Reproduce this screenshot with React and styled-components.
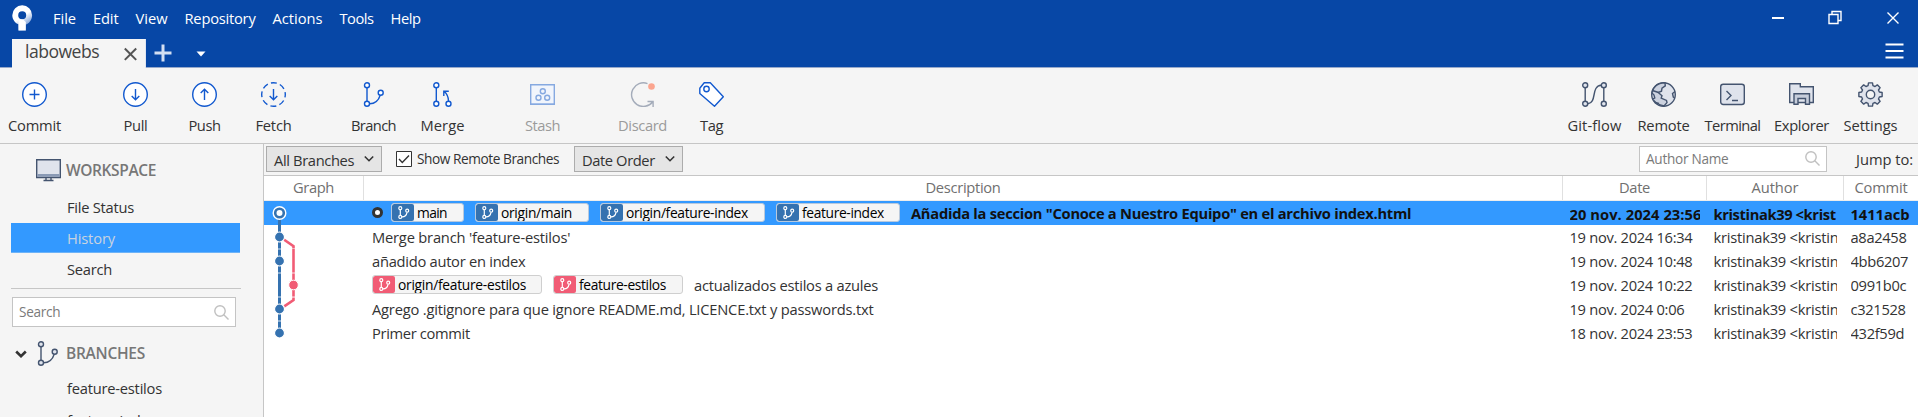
import React from "react";
import styled, { createGlobalStyle, css } from "styled-components";

const GlobalStyle = createGlobalStyle`
  * { box-sizing: border-box; }
  html, body { margin: 0; height: 100%; overflow: hidden; }
  body {
    font-family: "Open Sans", "Noto Sans", sans-serif;
    font-size: 14.7px;
    color: #333;
    background: #fff;
  }
  svg { display: block; flex: none; }
`;

const BLUE = "#1259cf";
const SLATE = "#44546f";
const SLATE_FILL = "#dfe3ec";
const TRUNK = "#3572b0";
const SIDE = "#f15c75";

/* A line of text with its own tracking */
const Text = styled.span`
  display: block;
  white-space: pre;
  line-height: 20px;
  letter-spacing: ${(p) => p.$track ?? -0.25}px;
`;

/* ---------- frame ---------- */
const Window = styled.div`
  display: flex;
  flex-direction: column;
  width: 100%;
  height: 417px;
  overflow: hidden;
  background: #f5f5f5;
`;
const TitleBar = styled.header`
  display: flex;
  align-items: flex-start;
  height: 39px;
  padding-left: 12px;
  background: #0747a6;
  color: #fff;
`;
const Logo = styled.div`
  width: 41px;
  padding-top: 4px;
`;
const Menu = styled.nav`
  display: flex;
  flex: 1;
  gap: 17px;
  padding-top: 8px;
`;
const WindowControls = styled.div`
  display: flex;
  padding: 10px 18px 0 0;
  gap: 43px;
`;
const TabStrip = styled.div`
  display: flex;
  height: 29px;
  background: linear-gradient(#0747a6 28px, #97a9ca 28px);
`;
const Tab = styled.div`
  display: flex;
  justify-content: space-between;
  width: 134px;
  height: 29px;
  margin-left: 12px;
  padding: 2px 8px 0 13px;
  background: #f5f5f5;
  border-right: 1px solid #dfe6f3;
  color: #444;
  font-size: 17.6px;
  svg { margin-top: 6px; }
`;
const TabActions = styled.div`
  display: flex;
  flex: 1;
  padding: 5px 0 0 8px;
  gap: 23px;
`;
const Hamburger = styled.div`
  padding: 4px 14px 0 0;
`;

/* ---------- toolbar ---------- */
const Toolbar = styled.div`
  display: flex;
  height: 76px;
  border-bottom: 1px solid #c6c6c6;
  padding-right: 13px;
`;
const ToolGroup = styled.div`
  display: flex;
  margin-left: ${(p) => p.$gap || 0}px;
`;
const Spacer = styled.div`
  flex: 1;
`;
const ToolButton = styled.div`
  display: flex;
  flex-direction: column;
  align-items: center;
  width: 69px;
  padding-top: 14px;
  gap: 8px;
  color: ${(p) => (p.$disabled ? "#9b9b9b" : "#333")};
`;

/* ---------- body ---------- */
const Body = styled.div`
  display: flex;
  flex: 1;
  min-height: 0;
`;
const Sidebar = styled.aside`
  width: 264px;
  border-right: 1px solid #c6c6c6;
  overflow: hidden;
`;
const SectionHead = styled.div`
  display: flex;
  align-items: center;
  height: 25px;
  margin-top: ${(p) => p.$top}px;
  padding-left: ${(p) => p.$left}px;
  font-size: 15.5px;
  font-weight: 600;
  color: #777;
  ${Text} { margin-top: -2px; }
`;
const HeadIcon = styled.div`
  width: ${(p) => p.$w}px;
`;
const NavItem = styled.div`
  display: flex;
  align-items: center;
  height: 31px;
  margin: 0 23px 0 11px;
  padding-left: 56px;
  ${(p) =>
    p.$active &&
    css`
      height: 30px;
      background: #3399ff;
      border-bottom: 1px solid #6db3f8;
      color: #c9d3e0;
    `}
`;
const NavList = styled.div`
  margin-top: ${(p) => p.$top}px;
  ${NavItem}:first-child { padding-bottom: 2px; }
`;
const Divider = styled.div`
  height: 1px;
  margin: 4px 22px 0 11px;
  background: #c6c6c6;
`;
const Field = styled.div`
  display: flex;
  align-items: center;
  justify-content: space-between;
  width: ${(p) => p.$w}px;
  height: ${(p) => p.$h}px;
  padding: 0 6px;
  background: #fff;
  border: 1px solid #c4c4c4;
  font-size: 13.6px;
  color: #7a7a7a;
`;
const SidebarSearch = styled.div`
  padding: 8px 0 0 12px;
`;

const Main = styled.main`
  flex: 1;
  min-width: 0;
  background: #fff;
`;
const FilterBar = styled.div`
  display: flex;
  align-items: center;
  height: 32px;
  padding: 0 5px 2px 2px;
  background: #f5f5f5;
  border-bottom: 1px solid #c6c6c6;
`;
const Select = styled.div`
  display: flex;
  align-items: center;
  justify-content: space-between;
  width: ${(p) => p.$w}px;
  height: 26px;
  padding: 2px 6px 0 7px;
  background: #e5e5e5;
  border: 1px solid #acacac;
  svg { margin-top: -1px; }
`;
const CheckLabel = styled.div`
  display: flex;
  align-items: center;
  gap: 5px;
  width: 178px;
  margin: 0 0 0 14px;
  font-size: 13.7px;
`;
const JumpTo = styled.div`
  margin-left: 29px;
`;

const Grid = styled.div`
  display: grid;
  grid-template-columns: 100px 1fr 144px 137px 74px;
`;
const GridHead = styled(Grid)`
  height: 25px;
  border-bottom: 1px solid #ededed;
  color: #707070;
`;
const HeadCell = styled.div`
  display: flex;
  justify-content: center;
  padding-top: 1px;
  border-right: ${(p) => (p.$last ? "none" : "1px solid #e0e0e0")};
`;
const Row = styled(Grid)`
  height: 24px;
  background: ${(p) => (p.$selected ? "#3399ff" : "#fff")};
  color: ${(p) => (p.$selected ? "#111" : "#333")};
  font-weight: ${(p) => (p.$selected ? 700 : 400)};
`;
const Cell = styled.div`
  margin: ${(p) => (p.$selected ? 3 : 2)}px 7px 0 6.5px;
  height: 21px;
  overflow: hidden;
`;
const DescCell = styled.div`
  display: flex;
  align-items: center;
  padding-left: 8px;
  overflow: hidden;
  padding-bottom: 1px;
`;
const Message = styled(Text)`
  padding-top: ${(p) => (p.$tagged ? 0 : 1)}px;
`;
const Head = styled.i`
  flex: none;
  width: 11px;
  height: 11px;
  margin-right: 8px;
  border: 3px solid #333;
  border-radius: 50%;
  background: #fff;
`;
const Ref = styled.div`
  display: flex;
  width: ${(p) => p.$w}px;
  height: 19px;
  margin-right: 11px;
  border: 1px solid ${(p) => (p.$selected ? "#b9c9dc" : "#cfcfcf")};
  border-radius: 3px;
  background: #f5f5f5;
  color: #000;
  font-size: 13.8px;
  font-weight: 400;
  overflow: hidden;
  ${Text} { line-height: 17px; padding-left: 3px; }
`;
const RefIcon = styled.div`
  display: flex;
  align-items: center;
  justify-content: center;
  width: 22px;
  border-radius: 2px;
  background: ${(p) => p.$color};
`;

/* ---------- icons ---------- */
const Svg = ({ w = 25, h = 25, color = BLUE, sw = 1.4, children }) => (
  <svg width={w} height={h} viewBox={`0 0 ${w} ${h}`} fill="none" stroke={color} strokeWidth={sw}>
    {children}
  </svg>
);
const AppLogo = () => (
  <svg width="21" height="28" viewBox="0 0 21 28">
    <defs>
      <linearGradient id="shade" x1="0.6" y1="0.4" x2="0.85" y2="0.85">
        <stop offset="0" stopColor="#fff" />
        <stop offset="1" stopColor="#5c89cf" />
      </linearGradient>
    </defs>
    <path
      fill="url(#shade)"
      fillRule="evenodd"
      d="M10.2 1.3a9.9 9.9 0 0 1 9.9 9.9c0 5.2-3.6 8.6-6.3 9.4v6H6.5v-6.3C3 18.8.3 15.4.3 11.200a9.900 9.900 0 0 1 9.900-9.900zM10.200 7.200a4 4 0 1 0 0 8 4 4 0 0 0 0-8z"
    />
    <path fill="#fff" d="M6.500 15.500h4.600l2.700 2.500v8.600H6.500z" />
  </svg>
);
const CircleIcon = ({ dashed, children }) => (
  <Svg>
    <circle cx="12.5" cy="12.5" r="11.8" fill={dashed ? "none" : "#fff"} strokeDasharray={dashed ? "6 3.27" : undefined} strokeDashoffset="3" />
    {children}
  </Svg>
);
const CommitIcon = () => <CircleIcon><path d="M12.5 7.5v10M7.5 12.5h10" /></CircleIcon>;
const PullIcon = () => <CircleIcon><path d="M12.5 7v10.800M8.700 14l3.800 3.800 3.800-3.800" /></CircleIcon>;
const PushIcon = () => <CircleIcon><path d="M12.5 18V7.200M8.700 11l3.800-3.800 3.800 3.800" /></CircleIcon>;
const FetchIcon = () => <CircleIcon dashed><path d="M12.5 7v10.800M8.700 14l3.800 3.800 3.800-3.800" /></CircleIcon>;
const BranchIcon = ({ color = BLUE, fill = "#fff" }) => (
  <Svg color={color}>
    <path d="M6 6v13M8.600 21.800c5.600 0 9-3.400 10.600-8.500" />
    <circle cx="6" cy="3.3" r="2.5" fill={fill} />
    <circle cx="6" cy="21.8" r="2.5" fill={fill} />
    <circle cx="19.7" cy="10.8" r="2.5" fill={fill} />
  </Svg>
);
const MergeIcon = () => (
  <Svg>
    <path d="M6.300 6v13M18.500 19c0-3.800-1.500-7-4.300-9.700M13.800 14V9.300h5" />
    <circle cx="6.3" cy="3.3" r="2.5" fill="#fff" />
    <circle cx="6.3" cy="21.8" r="2.5" fill="#fff" />
    <circle cx="18.5" cy="21.8" r="2.5" fill="#fff" />
  </Svg>
);
const StashIcon = () => (
  <Svg color="#86a9e0">
    <path d="M.7 2.700h23.600v19.600H.7z" fill="#f1f5fc" />
    <path d="M0 22.300h25" />
    <circle cx="12.8" cy="9.3" r="2.5" />
    <circle cx="8.5" cy="15.7" r="2.5" />
    <circle cx="17.2" cy="15.7" r="2.5" />
  </Svg>
);
const DiscardIcon = () => (
  <Svg color="#a4acba">
    <path d="M17.500 1.600A11.800 11.800 0 1 0 22.600 20M17.500 19.500h5.600v5.500" />
    <circle cx="21.5" cy="4.5" r="3.3" fill="#fba58f" stroke="none" />
  </Svg>
);
const TagIcon = () => (
  <Svg>
    <path d="M.8 6.200V11.500L15.500 24.200 24.300 14.700 11.300.8H5.200z" fill="#fff" strokeLinejoin="round" />
    <circle cx="7.5" cy="7" r="2.7" />
  </Svg>
);
const GitflowIcon = () => (
  <Svg w={27} color={SLATE}>
    <path d="M4.200 6v13M22.800 6v13M6.800 21.800C16.500 20.500 9.500 4.200 20.200 3.300" />
    {[4.2, 22.8].map((x) => [3.3, 21.8].map((y) => <circle key={`${x}-${y}`} cx={x} cy={y} r="2.5" fill={SLATE_FILL} />))}
  </Svg>
);
const RemoteIcon = () => (
  <Svg color={SLATE}>
    <circle cx="12.5" cy="12.5" r="11.8" fill={SLATE_FILL} />
    <path fill="#ccd2df" d="M14 .9l.3 3-3.300 2.300-.5 3-3.300 1.300 3.800 3.300-.8 2.300 5.300 2.300.5 2.200-3 3.400C9 23 4 21 1.800 17l2-1-.8-3-2-2C1.500 6 6 .8 14 .9z" />
    <path d="M1.500 8.500L7.500 10.500M24 9.500l-2.500 2 .8 3.500 1.200 1M3.800 20.500L8 21.500" />
  </Svg>
);
const TerminalIcon = () => (
  <Svg color={SLATE}>
    <rect x=".7" y="2.2" width="23.6" height="20.3" rx="2.5" fill={SLATE_FILL} />
    <path d="M6.500 9l4.500 4.500L6.500 18M12 18.500h6" />
  </Svg>
);
const ExplorerIcon = () => (
  <Svg color={SLATE}>
    <path fill={SLATE_FILL} d="M.7 20.500V1.700h10.600v3h13v15.800z" />
    <path fill="#c6cddb" d="M5 22.300V11.700h15.500v10.600h-4V16.500H9v5.800z" />
  </Svg>
);
const gear = (() => {
  const pts = [];
  for (let i = 0; i < 8; i += 1) {
    const a = (i * Math.PI) / 4 - Math.PI / 2;
    [[-0.27, 9.2], [-0.17, 11.8], [0.17, 11.8], [0.27, 9.2]].forEach(([d, r]) =>
      pts.push(`${(12.5 + r * Math.cos(a + d)).toFixed(2)} ${(12.5 + r * Math.sin(a + d)).toFixed(2)}`)
    );
  }
  return `M${pts.join("L")}Z`;
})();
const SettingsIcon = () => (
  <Svg color={SLATE}>
    <path d={gear} fill={SLATE_FILL} strokeLinejoin="round" />
    <circle cx="12.5" cy="12.5" r="4.2" fill="#f5f5f5" />
  </Svg>
);
const MonitorIcon = () => (
  <Svg w={25} h={23} color={SLATE}>
    <path d="M.7.7h23.600v17.800H.7z" fill={SLATE_FILL} />
    <path d="M1.400 15h22.200v2.800H1.400z" fill="#8a9ab5" stroke="none" />
    <path d="M10 18.500v3M15 18.500v3M7.500 21.500h10" />
  </Svg>
);
const SearchIcon = () => (
  <Svg w={15} h={15} color="#c0c0c0" sw={1.4}>
    <circle cx="6" cy="6" r="5.2" />
    <path d="M9.800 9.800l4.700 4.700" />
  </Svg>
);
const Chevron = ({ bold }) => (
  <Svg w={12} h={8} color="#333" sw={bold ? 2.6 : 1.6}>
    <path d={bold ? "M1.200 1.500L6 6.200l4.800-4.700" : "M1.800 1.500L6 5.700l4.200-4.200"} />
  </Svg>
);
const RefGlyph = () => (
  <Svg w={13} h={13} color="#fff" sw={1.2}>
    <path d="M3.300 3.800v5.600M5 10.800c3 0 4.600-2 5-4.500" />
    <circle cx="3.3" cy="2.2" r="1.5" />
    <circle cx="3.3" cy="10.9" r="1.5" />
    <circle cx="10.2" cy="4.7" r="1.5" />
  </Svg>
);

/* One row's slice of the commit graph */
const GraphCell = ({ kind }) => (
  <svg width="100" height="24" viewBox="0 0 100 24" fill="none">
    {kind === "head" && (
      <>
        <path d="M15.500 12v12" stroke={TRUNK} strokeWidth="3" />
        <circle cx="15.5" cy="12" r="7" fill="#fff" />
        <circle cx="15.5" cy="12" r="4.3" stroke={TRUNK} strokeWidth="2.6" />
      </>
    )}
    {kind === "merge" && (
      <>
        <path d="M15.500 0v23.600" stroke={TRUNK} strokeWidth="3" />
        <path d="M18 13.200l11.500 8V23.600" stroke={SIDE} strokeWidth="2.6" />
      </>
    )}
    {kind === "both" && (
      <>
        <path d="M15.500.4v23.200" stroke={TRUNK} strokeWidth="3" />
        <path d="M29.500 0v23.600" stroke={SIDE} strokeWidth="2.6" />
      </>
    )}
    {kind === "side" && (
      <>
        <path d="M15.500.4V23.600" stroke={TRUNK} strokeWidth="3" />
        <path d="M29.500.4V23.600" stroke={SIDE} strokeWidth="2.6" />
        <circle cx="29.5" cy="12" r="4.8" fill={SIDE} stroke="#fff" strokeWidth="1" />
      </>
    )}
    {kind === "fork" && (
      <>
        <path d="M15.500.4V23.600" stroke={TRUNK} strokeWidth="3" />
        <path d="M29.500.4V3L18 10.800" stroke={SIDE} strokeWidth="2.6" />
      </>
    )}
    {kind === "root" && <path d="M15.500.4V12" stroke={TRUNK} strokeWidth="3" />}
    {kind !== "head" && kind !== "side" && (
      <circle cx="15.5" cy="12" r="5" fill={TRUNK} stroke="#fff" strokeWidth="1.2" />
    )}
  </svg>
);

/* ---------- data ---------- */
const MENU = [["File", -0.06], ["Edit", -0.15], ["View", -0.02], ["Repository", -0.23], ["Actions", -0.02], ["Tools", -0.49], ["Help", -0.45]];
const TOOLS = [
  { items: [["Commit", CommitIcon, -0.21]] },
  { gap: 32, items: [["Pull", PullIcon, -0.32], ["Push", PushIcon, -0.46], ["Fetch", FetchIcon, -0.22]] },
  { gap: 31, items: [["Branch", BranchIcon, -0.62], ["Merge", MergeIcon, 0.06]] },
  { gap: 31, items: [["Stash", StashIcon, -0.49, true]] },
  { gap: 31, items: [["Discard", DiscardIcon, -0.37, true], ["Tag", TagIcon, -0.41]] },
];
const RIGHT_TOOLS = [["Git-flow", GitflowIcon, 0.1], ["Remote", RemoteIcon, -0.21], ["Terminal", TerminalIcon, -0.57], ["Explorer", ExplorerIcon, -0.33], ["Settings", SettingsIcon, -0.06]];
const COMMITS = [
  {
    graph: "head", selected: true, color: TRUNK,
    refs: [["main", 73, -0.6], ["origin/main", 114, -0.3], ["origin/feature-index", 165, -0.33], ["feature-index", 124, -0.36]],
    message: 'Añadida la seccion "Conoce a Nuestro Equipo" en el archivo index.html', track: -0.26,
    date: "20 nov. 2024 23:56", author: "kristinak39 <krist", hash: "1411acb", dateTrack: 0.06, hashTrack: -0.04,
  },
  { graph: "merge", message: "Merge branch 'feature-estilos'", track: -0.2, date: "19 nov. 2024 16:34", hash: "a8a2458" },
  { graph: "both", message: "añadido autor en index", track: -0.27, date: "19 nov. 2024 10:48", hash: "4bb6207" },
  {
    graph: "side", color: SIDE,
    refs: [["origin/feature-estilos", 170, -0.28], ["feature-estilos", 130, -0.36]],
    message: "actualizados estilos a azules", track: -0.25, date: "19 nov. 2024 10:22", hash: "0991b0c",
  },
  { graph: "fork", message: "Agrego .gitignore para que ignore README.md, LICENCE.txt y passwords.txt", track: -0.2, date: "19 nov. 2024 0:06", hash: "c321528" },
  { graph: "root", message: "Primer commit", track: -0.34, date: "18 nov. 2024 23:53", hash: "432f59d" },
];

const Tool = ({ item: [label, Icon, track, disabled] }) => (
  <ToolButton $disabled={disabled}>
    <Icon />
    <Text $track={track}>{label}</Text>
  </ToolButton>
);

const CommitRow = ({ c }) => (
  <Row $selected={c.selected}>
    <GraphCell kind={c.graph} />
    <DescCell>
      {c.selected && <Head />}
      {c.refs?.map(([name, w, track]) => (
        <Ref key={name} $w={w} $selected={c.selected}>
          <RefIcon $color={c.color}><RefGlyph /></RefIcon>
          <Text $track={track}>{name}</Text>
        </Ref>
      ))}
      <Message $track={c.track} $tagged={!!c.refs}>{c.message}</Message>
    </DescCell>
    <Cell $selected={c.selected}><Text $track={c.dateTrack ?? -0.3}>{c.date}</Text></Cell>
    <Cell $selected={c.selected}><Text $track={c.selected ? -0.38 : -0.23}>{c.author ?? "kristinak39 <kristin"}</Text></Cell>
    <Cell $selected={c.selected}><Text $track={c.hashTrack ?? -0.33}>{c.hash}</Text></Cell>
  </Row>
);

export default function App() {
  return (
    <Window>
      <GlobalStyle />
      <TitleBar>
        <Logo><AppLogo /></Logo>
        <Menu>
          {MENU.map(([label, track]) => <Text key={label} $track={track}>{label}</Text>)}
        </Menu>
        <WindowControls>
          <Svg w={14} h={16} color="#fff"><path d="M1 8h12" strokeWidth="2" /></Svg>
          <Svg w={15} h={16} color="#fff"><path d="M1 4.500h9v9H1zM4 4.500V1.500h9v9h-3" /></Svg>
          <Svg w={14} h={16} color="#fff"><path d="M1.500 2.500l11 11M12.500 2.500l-11 11" /></Svg>
        </WindowControls>
      </TitleBar>
      <TabStrip>
        <Tab>
          <Text $track={-0.53}>labowebs</Text>
          <Svg w={13} h={14} color="#555" sw={2}><path d="M.8 1.500l11.400 11.400M12.200 1.500L.8 12.900" /></Svg>
        </Tab>
        <TabActions>
          <Svg w={18} h={18} color="#d3dff2" sw={3}><path d="M9 .5v17M.5 9h17" /></Svg>
          <Svg w={12} h={16} color="none"><path d="M1.500 7.500h9L6 12.500z" fill="#fff" /></Svg>
        </TabActions>
        <Hamburger>
          <Svg w={19} h={17} color="#fff" sw={1.8}><path d="M.5 1.500h18M.5 8h18M.5 14.500h18" /></Svg>
        </Hamburger>
      </TabStrip>
      <Toolbar>
        {TOOLS.map((g) => (
          <ToolGroup key={g.items[0][0]} $gap={g.gap}>
            {g.items.map((item) => <Tool key={item[0]} item={item} />)}
          </ToolGroup>
        ))}
        <Spacer />
        <ToolGroup>
          {RIGHT_TOOLS.map((item) => <Tool key={item[0]} item={item} />)}
        </ToolGroup>
      </Toolbar>
      <Body>
        <Sidebar>
          <SectionHead $top={14} $left={36}>
            <HeadIcon $w={30}><MonitorIcon /></HeadIcon>
            <Text $track={-0.38}>WORKSPACE</Text>
          </SectionHead>
          <NavList $top={9}>
            <NavItem><Text>File Status</Text></NavItem>
            <NavItem $active><Text $track={-0.14}>History</Text></NavItem>
            <NavItem><Text>Search</Text></NavItem>
          </NavList>
          <Divider />
          <SidebarSearch>
            <Field $w={224} $h={30}><Text $track={-0.29}>Search</Text><SearchIcon /></Field>
          </SidebarSearch>
          <SectionHead $top={14} $left={15}>
            <HeadIcon $w={20}><Chevron bold /></HeadIcon>
            <HeadIcon $w={31}><BranchIcon color={SLATE} fill={SLATE_FILL} /></HeadIcon>
            <Text $track={-0.27}>BRANCHES</Text>
          </SectionHead>
          <NavList $top={7}>
            <NavItem><Text $track={-0.22}>feature-estilos</Text></NavItem>
            <NavItem><Text>feature-index</Text></NavItem>
          </NavList>
        </Sidebar>
        <Main>
          <FilterBar>
            <Select $w={116}><Text $track={-0.36}>All Branches</Text><Chevron /></Select>
            <CheckLabel>
              <Svg w={16} h={16} color="#333" sw={1}>
                <path d="M.5.5h15v15H.5z" fill="#fff" />
                <path d="M3 8l3.300 3.500L13 4.500" strokeWidth="1.4" />
              </Svg>
              <Text $track={-0.45}>Show Remote Branches</Text>
            </CheckLabel>
            <Select $w={109}><Text $track={-0.4}>Date Order</Text><Chevron /></Select>
            <Spacer />
            <Field $w={188} $h={26}><Text $track={-0.27}>Author Name</Text><SearchIcon /></Field>
            <JumpTo><Text $track={-0.04}>Jump to:</Text></JumpTo>
          </FilterBar>
          <GridHead>
            <HeadCell><Text $track={-0.37}>Graph</Text></HeadCell>
            <HeadCell><Text $track={-0.31}>Description</Text></HeadCell>
            <HeadCell><Text $track={-0.33}>Date</Text></HeadCell>
            <HeadCell><Text $track={-0.07}>Author</Text></HeadCell>
            <HeadCell $last><Text $track={-0.21}>Commit</Text></HeadCell>
          </GridHead>
          {COMMITS.map((c) => <CommitRow key={c.hash} c={c} />)}
        </Main>
      </Body>
    </Window>
  );
}
